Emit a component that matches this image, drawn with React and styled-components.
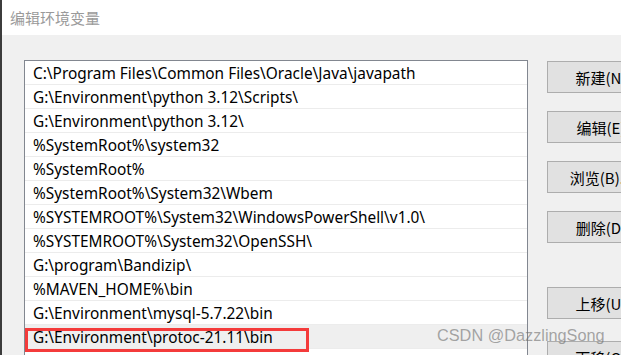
import React from 'react';
import styled, { createGlobalStyle } from 'styled-components';

const GlobalStyle = createGlobalStyle`
  html, body {
    margin: 0;
    padding: 0;
    background: #f0f0f0;
  }
  body {
    font-family: "Noto Sans", "Noto Sans CJK SC", sans-serif;
  }
`;

const paths = [
  'C:\\Program Files\\Common Files\\Oracle\\Java\\javapath',
  'G:\\Environment\\python 3.12\\Scripts\\',
  'G:\\Environment\\python 3.12\\',
  '%SystemRoot%\\system32',
  '%SystemRoot%',
  '%SystemRoot%\\System32\\Wbem',
  '%SYSTEMROOT%\\System32\\WindowsPowerShell\\v1.0\\',
  '%SYSTEMROOT%\\System32\\OpenSSH\\',
  'G:\\program\\Bandizip\\',
  '%MAVEN_HOME%\\bin',
  'G:\\Environment\\mysql-5.7.22\\bin',
  'G:\\Environment\\protoc-21.11\\bin',
];

const buttons = [
  { label: '新建(N)', gap: 0 },
  { label: '编辑(E)', gap: 18 },
  { label: '浏览(B)...', gap: 18 },
  { label: '删除(D)', gap: 18 },
  { label: '上移(U)', gap: 44 },
  { label: '下移(O)', gap: 22 },
];

const Window = styled.div`
  position: relative;
  width: 621px;
  height: 355px;
  overflow: hidden;
  background: #f0f0f0;
  border-left: 2px solid #3c3c3c;
  box-sizing: border-box;
`;

const TitleBar = styled.div`
  height: 35px;
  background: #ffffff;
  display: flex;
  align-items: center;
  padding-left: 8px;
  font-family: "Noto Sans CJK SC", sans-serif;
  font-size: 15px;
  color: #9a9a9a;
`;

const Body = styled.div`
  display: flex;
  align-items: flex-start;
  padding: 25px 0 0 22px;
  gap: 19px;
`;

const List = styled.div`
  width: 502px;
  height: 320px;
  flex-shrink: 0;
  background: #ffffff;
  border: 1px solid #828790;
  box-sizing: content-box;
`;

const Row = styled.div`
  position: relative;
  height: 23px;
  box-sizing: border-box;
  height: 24px;
  padding: 2px 0 0 8px;
  border-bottom: 1px solid #ececec;
  background: ${(p) => (p.$selected ? '#efefef' : '#ffffff')};
  display: flex;
  align-items: center;
  font-family: "Noto Sans", "Noto Sans CJK SC", sans-serif;
  font-size: 15.4px;
  color: #000000;
  white-space: nowrap;
`;

const Marker = styled.div`
  position: absolute;
  left: 0;
  top: 3px;
  width: 284px;
  height: 24px;
  border: 3px solid #f43b3b;
  box-sizing: border-box;
`;

const ButtonColumn = styled.div`
  display: flex;
  flex-direction: column;
  padding-top: 1px;
`;

const Button = styled.div`
  width: 106px;
  height: 30px;
  margin-top: ${(p) => p.$gap}px;
  background: #e1e1e1;
  border: 1px solid #adadad;
  display: flex;
  align-items: center;
  justify-content: center;
  font-family: "Noto Sans CJK SC", sans-serif;
  font-size: 15px;
  color: #000000;
  white-space: nowrap;
`;

const Watermark = styled.div`
  position: absolute;
  left: 435px;
  top: 326px;
  font-family: "Liberation Sans", Arial, sans-serif;
  font-size: 16.3px;
  color: rgba(110, 110, 110, 0.6);
  white-space: nowrap;
  pointer-events: none;
`;

export default function App() {
  return (
    <>
      <GlobalStyle />
      <Window>
        <TitleBar>编辑环境变量</TitleBar>
        <Body>
          <List>
            {paths.map((p, i) => (
              <Row key={i} $selected={i === paths.length - 1}>
                {p}
                {i === paths.length - 1 && <Marker />}
              </Row>
            ))}
          </List>
          <ButtonColumn>
            {buttons.map((b) => (
              <Button key={b.label} $gap={b.gap}>
                {b.label}
              </Button>
            ))}
          </ButtonColumn>
        </Body>
        <Watermark>CSDN @DazzlingSong</Watermark>
      </Window>
    </>
  );
}
